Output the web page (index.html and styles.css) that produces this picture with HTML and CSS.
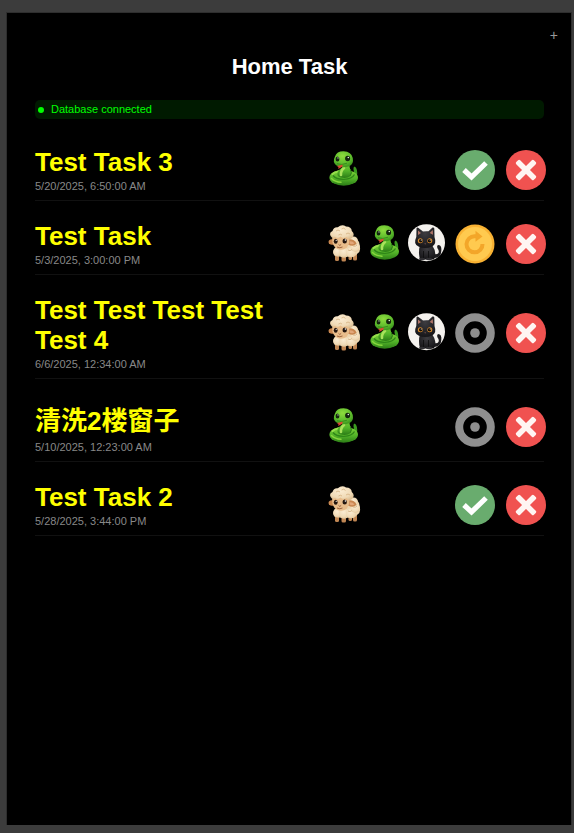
FILE: index.html
```html
<!DOCTYPE html>
<html lang="en">
<head>
<meta charset="utf-8">
<meta name="viewport" content="width=device-width, initial-scale=1">
<title>Home Task</title>
<link rel="stylesheet" href="styles.css">
</head>
<body>
<svg class="sprite" width="0" height="0" aria-hidden="true">
  <defs>
    <radialGradient id="snake-head" cx=".45" cy=".3" r=".75">
      <stop offset="0" stop-color="#8edb3e"/><stop offset=".6" stop-color="#5fbd2d"/><stop offset="1" stop-color="#378f1b"/>
    </radialGradient>
    <linearGradient id="snake-body" x1="0" y1="0" x2="0" y2="1">
      <stop offset="0" stop-color="#7fd038"/><stop offset=".55" stop-color="#53b429"/><stop offset="1" stop-color="#2b7c16"/>
    </linearGradient>
    <radialGradient id="wool" cx=".45" cy=".35" r=".75">
      <stop offset="0" stop-color="#fbecd2"/><stop offset=".65" stop-color="#f0dab6"/><stop offset="1" stop-color="#d8b98c"/>
    </radialGradient>
    <radialGradient id="fur" cx=".5" cy=".3" r=".7">
      <stop offset="0" stop-color="#3d3c40"/><stop offset="1" stop-color="#161518"/>
    </radialGradient>
  </defs>

  <symbol id="snake" viewBox="0 0 40 40">
    <path d="M27 25 Q31 23 29.500 19.500 Q29 17 30.800 16.500 Q34 19 33 26 L28 29Z" fill="#3c9a20"/>
    <ellipse cx="19.700" cy="27.700" rx="14.300" ry="8" fill="url(#snake-body)"/>
    <path d="M9 25.500 Q12 29.500 20 29.300 Q28 29 30.500 24.500" fill="none" stroke="#2f8518" stroke-width="1.300"/>
    <path d="M7.500 28.500 Q11 32 17 32.300" fill="none" stroke="#86d63c" stroke-width="1.500" stroke-linecap="round"/>
    <path d="M8.500 24 Q11 21.500 14.500 21.700" fill="none" stroke="#97df4c" stroke-width="2" stroke-linecap="round"/>
    <path d="M18 13 L26 12 Q24.500 17 27.500 22 Q28.500 27.500 20.500 28 Q12 27.500 13.500 22.500 Q15 19.500 18.500 17Z" fill="url(#snake-body)"/>
    <path d="M26.300 19 Q28.700 23 26 26" fill="none" stroke="#2b7c16" stroke-width="1"/>
    <path d="M20 18 Q16.500 21 17 25" fill="none" stroke="#a8e35b" stroke-width="2.600" stroke-linecap="round"/>
    <path d="M11 6.500 Q12.500 1.300 19.500 1.300 Q27.500 1.800 28.800 8 Q30 14.500 25 16.300 Q18 18.300 12.500 15.500 Q8 12 11 6.500Z" fill="url(#snake-head)"/>
    <ellipse cx="13.500" cy="9" rx="1.900" ry="2.500" fill="#14260e"/>
    <ellipse cx="23.600" cy="8.500" rx="2.500" ry="2.800" fill="#14260e"/>
    <circle cx="14" cy="7.900" r=".6" fill="#e8f5df"/><circle cx="24.300" cy="7.500" r=".8" fill="#e8f5df"/>
    <path d="M13 13.700 Q17.500 15.500 23 13.200" fill="none" stroke="#2f8518" stroke-width=".8"/>
    <path d="M18.500 14.500 L15.500 15.500 L12.700 16 L14.500 17 L14.200 19 L16.500 17.700 L18.500 16.500Z" fill="#d94b32"/>
  </symbol>

  <symbol id="sheep" viewBox="0 0 40 40">
    <g fill="#c08653">
      <rect x="11" y="29" width="4" height="8" rx="1.500"/><rect x="17.500" y="29" width="4.500" height="8.500" rx="1.500"/>
      <rect x="24.500" y="29" width="3.500" height="7" rx="1.500"/><rect x="29" y="28" width="4" height="8.500" rx="1.500"/>
    </g>
    <path d="M10 25 Q9 33 16 32.500 Q20 34.500 24 32.500 Q30 34.500 33 30 Q37.500 27 35.500 22 Q36 16 31 15 Q26 12 20 18Z" fill="#ecd5b0"/>
    <g fill="url(#wool)">
      <circle cx="13.500" cy="28" r="4.500"/><circle cx="20" cy="28.500" r="5"/><circle cx="27" cy="28.500" r="5"/>
      <circle cx="31.300" cy="23" r="4.700"/><circle cx="29.500" cy="17" r="4.500"/>
    </g>
    <path d="M9.500 15.500 Q5 14.500 4.500 18 Q5 21.500 10 20.500Z" fill="#c98750"/>
    <path d="M24 15.500 Q30 14.500 32.500 19.500 Q29.500 23.500 24 20.500Z" fill="#c98750"/>
    <path d="M25.500 17.200 Q29 17 30.500 19.500 Q28 21 25.500 19.500Z" fill="#e3a77a"/>
    <path d="M8.500 12 Q16 7 25 12 Q26.500 19 22.500 24 Q17 27.500 11.500 24 Q7 19 8.500 12Z" fill="#e9bd8b"/>
    <path d="M7 12.500 Q4.500 9 8.500 7 Q9.500 2.800 13.800 3.200 Q18 -.5 22 2.500 Q27.500 2.500 27.800 7 Q31.500 10.500 28 14 Q25 16.500 22.500 13 Q19.500 15.500 16.500 12.500 Q13 15.500 11 12.800 Q8.500 15 7 12.500Z" fill="url(#wool)"/>
    <path d="M12 7q2-2 4 0M17.500 5q2.500-2 4 .5M22 10q2-2 4 0M14.500 11q2-1.500 3.500 0" fill="none" stroke="#d4b182" stroke-width=".8"/>
    <ellipse cx="11.700" cy="17.300" rx="1.900" ry="2.500" fill="#24160f"/><ellipse cx="20.700" cy="17" rx="2.200" ry="2.600" fill="#24160f"/>
    <circle cx="12.200" cy="16.300" r=".6" fill="#fff"/><circle cx="21.400" cy="16" r=".8" fill="#fff"/>
    <path d="M14.500 20.300 L15.800 21.500 L17.200 20.300 M13 23 Q15.800 24.500 18.500 23" fill="none" stroke="#8a4c2b" stroke-width=".8"/>
    <path d="M24 26q2 1.500 4-.5M29 22q2.500 1 4-1" fill="none" stroke="#cfac7e" stroke-width=".8"/>
  </symbol>

  <symbol id="cat" viewBox="0 0 40 40">
    <circle cx="20.500" cy="18.700" r="18.500" fill="#f5f2ee"/>
    <path d="M28 30 Q34 31 32.500 26 Q30 22.500 32 21 Q36 21 35.300 27 Q35 34 28 34Z" fill="#1b1a1d"/>
    <path d="M14 21 Q12 28 14 35.500 L28 35.500 Q31.500 29 26 21Z" fill="url(#fur)"/>
    <path d="M10.300 13 L10.500 4.500 Q11 3 12.500 4 L17 7.500 Q20 7 22.500 7.300 L26.500 3.500 Q28 3 28.300 4.500 L28.500 13 Q31 20 26 22.500 Q19 25.500 12.500 22.500 Q7 20 10.300 13Z" fill="url(#fur)"/>
    <path d="M12 6.500 L15 9 L12 11Z M26.800 6 L23.700 9 L27 10.800Z" fill="#b07568"/>
    <circle cx="14.300" cy="16.800" r="2.500" fill="#d88a2b"/><circle cx="23.800" cy="16.800" r="2.500" fill="#d88a2b"/>
    <circle cx="14.700" cy="16.800" r="1.700" fill="#120d09"/><circle cx="23.500" cy="16.800" r="1.700" fill="#120d09"/>
    <circle cx="15.300" cy="16" r=".6" fill="#fff"/><circle cx="24.200" cy="16" r=".6" fill="#fff"/>
    <path d="M18.300 19.500h1.800l-.9 1z" fill="#a06a60"/>
    <path d="M17.500 27v8M22.500 27v8" stroke="#0b0b0d" stroke-width=".8"/>
    <ellipse cx="16" cy="35" rx="3" ry="1.300" fill="#2f2e32"/><ellipse cx="23" cy="35" rx="3" ry="1.300" fill="#2f2e32"/>
  </symbol>

  <symbol id="done" viewBox="0 0 40 40">
    <circle cx="20" cy="20" r="20" fill="#69ac6e"/>
    <path d="M9 20 L16.500 27 L31 13" fill="none" stroke="#fff" stroke-width="5.200"/>
  </symbol>
  <symbol id="again" viewBox="0 0 40 40">
    <circle cx="20" cy="20" r="19.500" fill="#f9b233"/>
    <circle cx="20" cy="20" r="17" fill="#ffca4f"/>
    <path d="M27.500 20 A8 8 0 1 1 20 12.300 H22.500" fill="none" stroke="#f3a629" stroke-width="4"/>
    <path d="M20.500 6.800 L27.500 12.600 L20.500 17.800Z" fill="#f3a629"/>
  </symbol>
  <symbol id="pending" viewBox="0 0 40 40">
    <circle cx="20" cy="20" r="15.800" fill="none" stroke="#8f8f8f" stroke-width="8"/>
    <circle cx="20" cy="20" r="4.800" fill="#8f8f8f"/>
  </symbol>
  <symbol id="remove" viewBox="0 0 40 40">
    <circle cx="20" cy="20" r="20" fill="#f05250"/>
    <g fill="#fff5f2">
      <rect x="7.500" y="17.200" width="25" height="5.600" rx="1.500" transform="rotate(45 20 20)"/>
      <rect x="7.500" y="17.200" width="25" height="5.600" rx="1.500" transform="rotate(-45 20 20)"/>
    </g>
  </symbol>
</svg>

<main class="panel">
  <div class="toolbar"><button class="add" type="button">+</button></div>
  <h1 class="heading">Home Task</h1>
  <p class="status" role="status"><span class="dot"></span>Database connected</p>

  <ul class="tasks">
    <li class="task">
      <div class="info"><h2 class="title">Test Task 3</h2><time class="date">5/20/2025, 6:50:00 AM</time></div>
      <div class="people"><svg class="avatar"><use href="#snake"/></svg></div>
      <div class="actions">
        <button class="action" type="button" aria-label="Done"><svg class="icon"><use href="#done"/></svg></button>
        <button class="action" type="button" aria-label="Delete"><svg class="icon"><use href="#remove"/></svg></button>
      </div>
    </li>
    <li class="task">
      <div class="info"><h2 class="title">Test Task</h2><time class="date">5/3/2025, 3:00:00 PM</time></div>
      <div class="people"><svg class="avatar"><use href="#sheep"/></svg><svg class="avatar"><use href="#snake"/></svg><svg class="avatar"><use href="#cat"/></svg></div>
      <div class="actions">
        <button class="action" type="button" aria-label="Repeat"><svg class="icon"><use href="#again"/></svg></button>
        <button class="action" type="button" aria-label="Delete"><svg class="icon"><use href="#remove"/></svg></button>
      </div>
    </li>
    <li class="task">
      <div class="info"><h2 class="title">Test Test Test Test Test 4</h2><time class="date">6/6/2025, 12:34:00 AM</time></div>
      <div class="people"><svg class="avatar"><use href="#sheep"/></svg><svg class="avatar"><use href="#snake"/></svg><svg class="avatar"><use href="#cat"/></svg></div>
      <div class="actions">
        <button class="action" type="button" aria-label="Pending"><svg class="icon"><use href="#pending"/></svg></button>
        <button class="action" type="button" aria-label="Delete"><svg class="icon"><use href="#remove"/></svg></button>
      </div>
    </li>
    <li class="task">
      <div class="info"><h2 class="title title-cjk" lang="zh-CN">清洗2楼窗子</h2><time class="date">5/10/2025, 12:23:00 AM</time></div>
      <div class="people"><svg class="avatar"><use href="#snake"/></svg></div>
      <div class="actions">
        <button class="action" type="button" aria-label="Pending"><svg class="icon"><use href="#pending"/></svg></button>
        <button class="action" type="button" aria-label="Delete"><svg class="icon"><use href="#remove"/></svg></button>
      </div>
    </li>
    <li class="task">
      <div class="info"><h2 class="title">Test Task 2</h2><time class="date">5/28/2025, 3:44:00 PM</time></div>
      <div class="people"><svg class="avatar"><use href="#sheep"/></svg></div>
      <div class="actions">
        <button class="action" type="button" aria-label="Done"><svg class="icon"><use href="#done"/></svg></button>
        <button class="action" type="button" aria-label="Delete"><svg class="icon"><use href="#remove"/></svg></button>
      </div>
    </li>
  </ul>
</main>
</body>
</html>
```

FILE: styles.css
```css
* {
  box-sizing: border-box;
}

body {
  display: flex;
  min-height: 100vh;
  margin: 0;
  padding: 12px 2px 8px 6px;
  background: #3c3c3c;
  color: #fff;
  font-family: "Liberation Sans", Arial, "Noto Sans CJK SC", sans-serif;
}

.sprite {
  position: absolute;
}

.panel {
  flex: 1;
  padding: 12px 27px 12px 28px;
  border: 1px solid #2e2e2e;
  border-bottom: 0;
  background: #000;
}

.toolbar {
  display: flex;
  justify-content: flex-end;
  margin-right: -16px;
}

.add {
  padding: 0 2px;
  border: 0;
  background: none;
  color: #999;
  font: 14px/20px "Liberation Sans", Arial, sans-serif;
}

.heading {
  margin: 9px 0 20px;
  font-size: 22px;
  line-height: 26px;
  text-align: center;
}

.status {
  display: flex;
  align-items: center;
  gap: 7px;
  margin: 0 0 8px;
  padding: 3px;
  border-radius: 5px;
  background: #001a00;
  color: #0f0;
  font-size: 11px;
  line-height: 13px;
}

.dot {
  width: 6px;
  height: 6px;
  border-radius: 50%;
  background: #0f0;
}

.tasks {
  margin: 0;
  padding: 0;
  list-style: none;
}

.task {
  display: flex;
  align-items: center;
  gap: 8px;
  padding: 20px 0 7px;
  border-bottom: 1px solid #111;
}

.info {
  flex: 1;
}

.title {
  margin: 0 0 3px;
  color: #ff0;
  font-size: 26px;
  line-height: 30px;
}

.title-cjk {
  padding-top: 5px;
  line-height: 34px;
}

.date {
  display: block;
  color: #888;
  font-size: 11px;
  line-height: 13px;
}

.people {
  display: flex;
  gap: 1px;
  width: 123px;
}

.avatar,
.icon {
  display: block;
  width: 40px;
  height: 40px;
}

.actions {
  display: flex;
  gap: 11px;
  margin-right: -2px;
}

.action {
  padding: 0;
  border: 0;
  background: none;
}
```
